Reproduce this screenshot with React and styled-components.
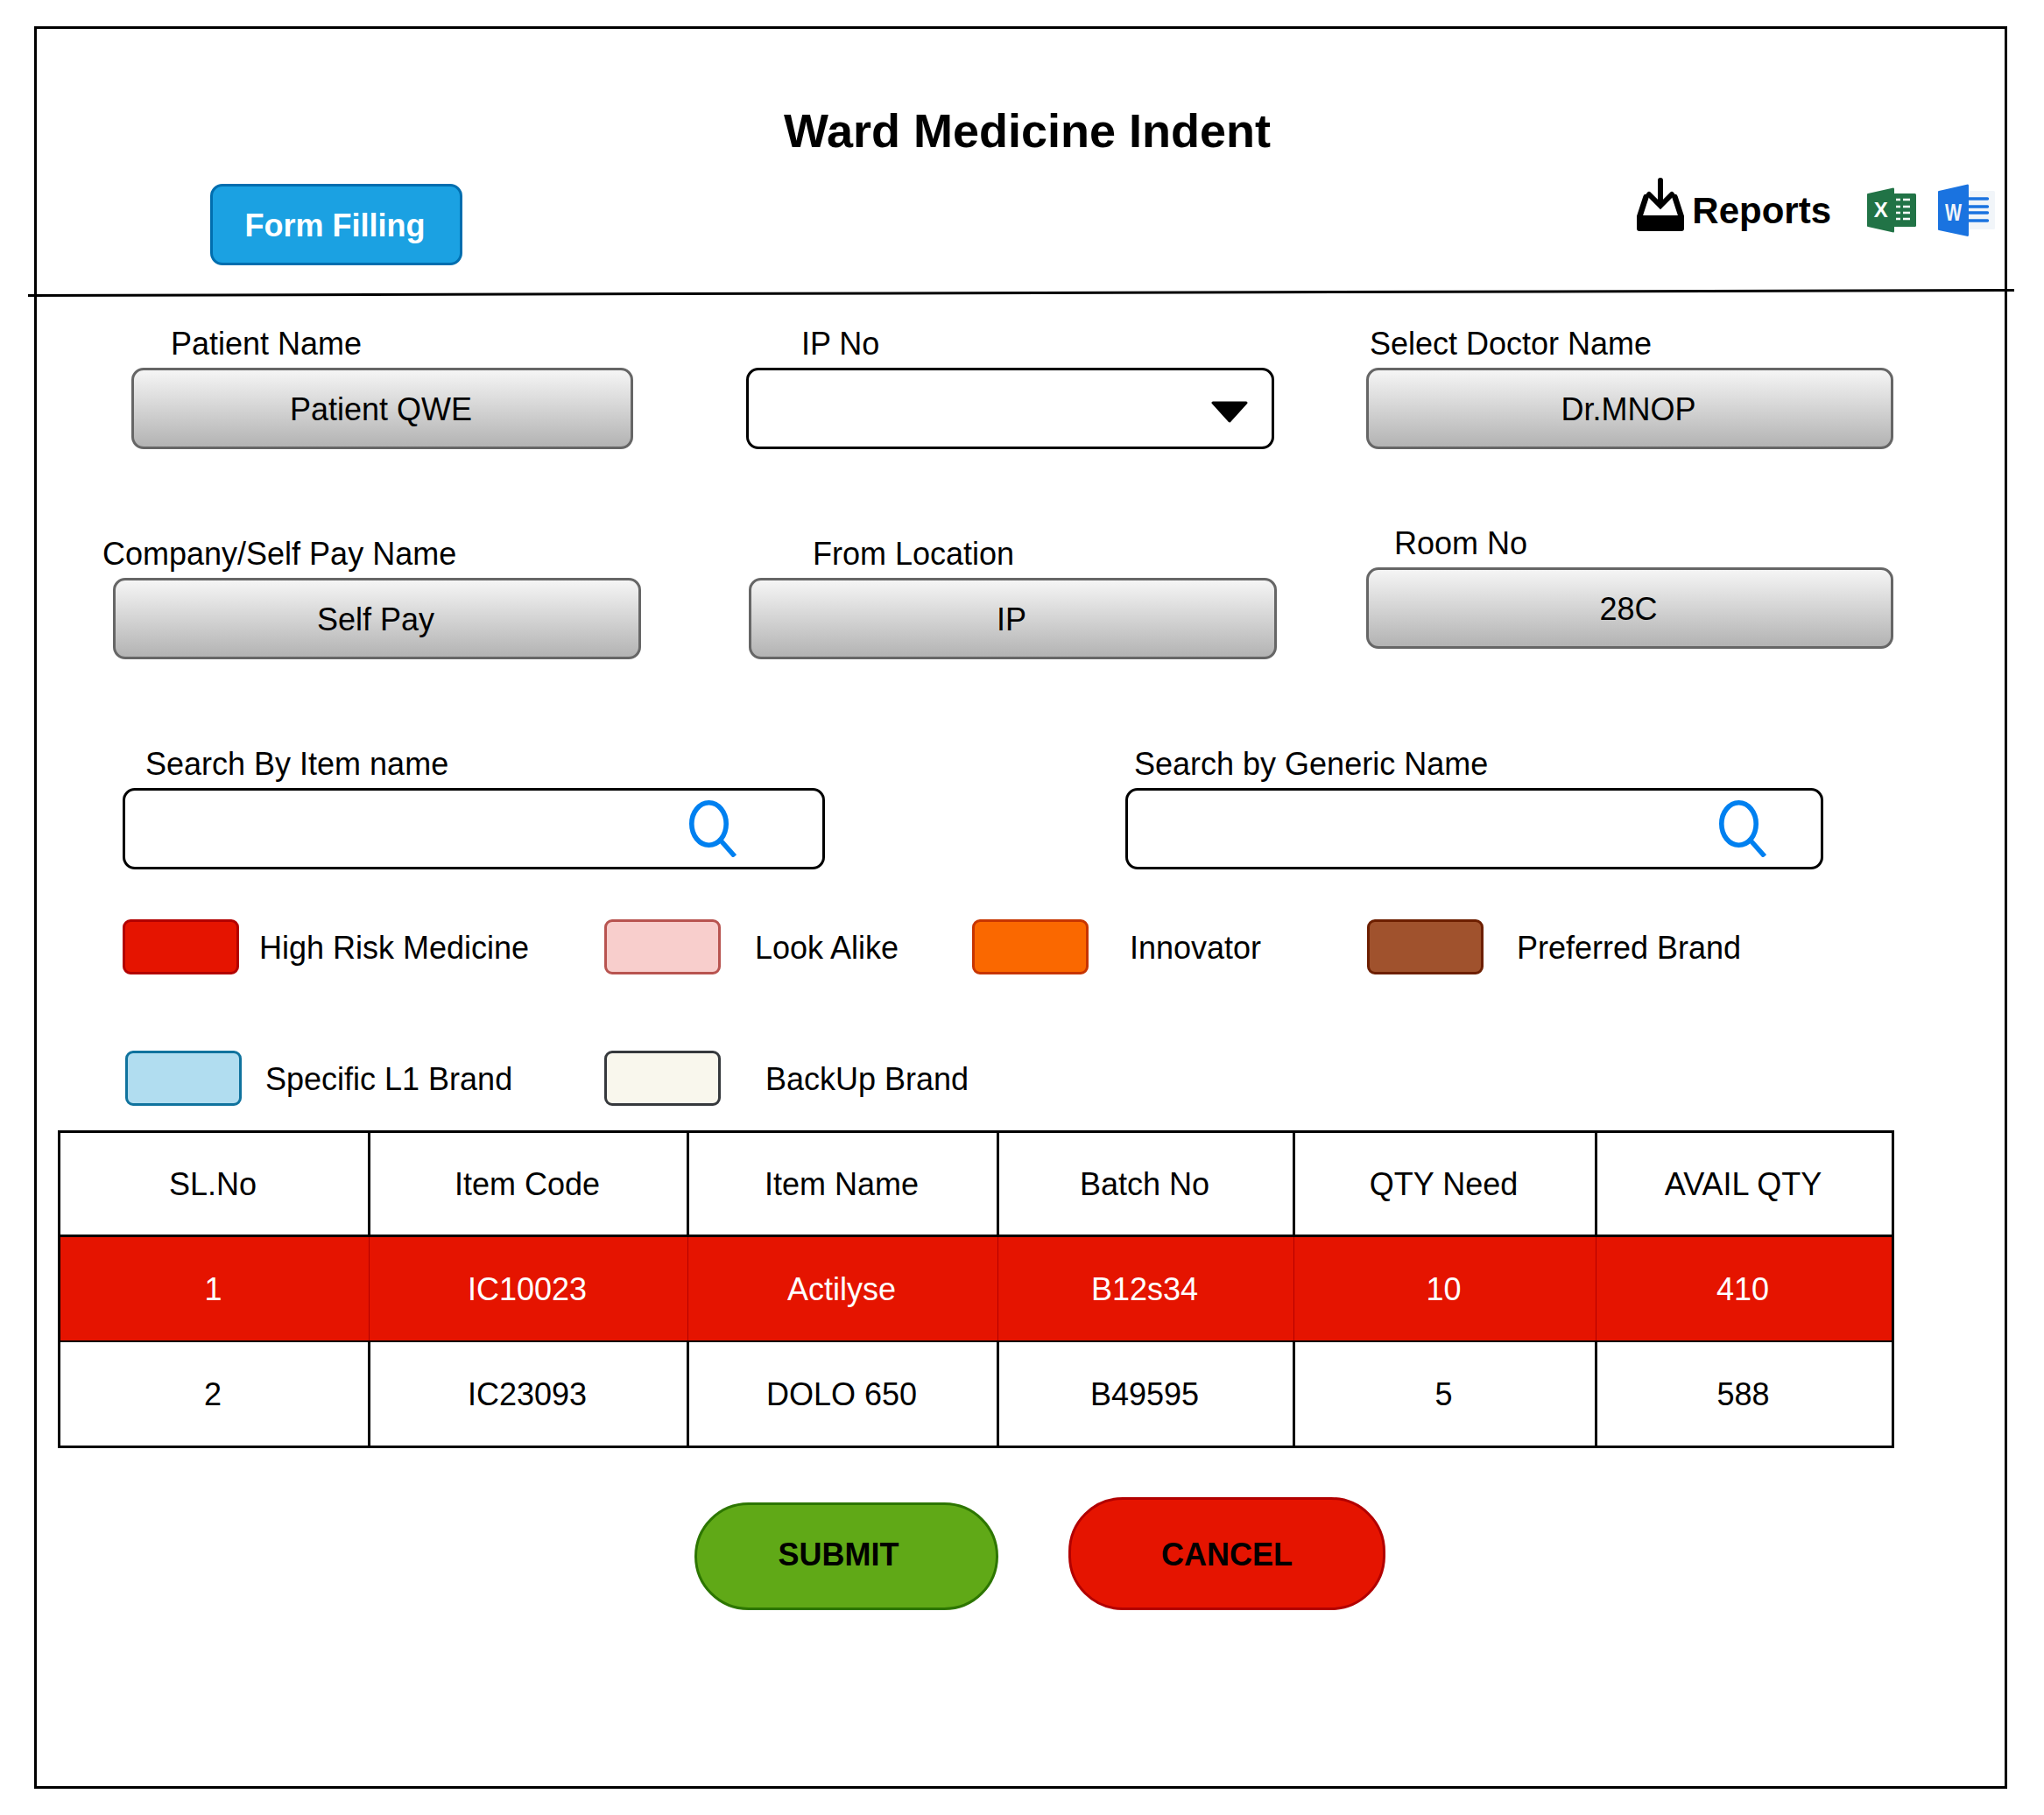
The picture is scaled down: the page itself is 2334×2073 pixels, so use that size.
import React from "react";
import styled, { createGlobalStyle } from "styled-components";

const GlobalStyle = createGlobalStyle`
  html, body {
    margin: 0;
    padding: 0;
    background: #fff;
    color: #000;
    font-family: "Liberation Sans", Arial, sans-serif;
  }
`;

const Page = styled.div`
  padding: 30px 0 30px 39px;
  width: 2334px;
  height: 2073px;
  box-sizing: border-box;
  overflow: hidden;
`;

const Frame = styled.div`
  width: 2253px;
  height: 2013px;
  box-sizing: border-box;
  border: 3px solid #000;
`;

const Title = styled.h1`
  margin: 0;
  padding: 85px 0 0 15px;
  font-size: 54px;
  line-height: 62px;
  font-weight: 700;
  text-align: center;
`;

const Toolbar = styled.div`
  display: flex;
  align-items: flex-start;
  justify-content: space-between;
  margin-top: 30px;
  padding: 0 11px 0 198px;
`;

const ModeButton = styled.button`
  width: 288px;
  height: 93px;
  box-sizing: border-box;
  border: 3px solid #006eaf;
  border-radius: 14px;
  background: #1ba1e2;
  color: #fff;
  font: 700 36px "Liberation Sans", Arial, sans-serif;
  padding: 2px 3px 0 0;
`;

const Exports = styled.div`
  display: flex;
  align-items: center;
  height: 60px;
`;

const ReportsIcon = styled.svg`
  width: 54px;
  height: 61px;
  margin-bottom: 14px;
`;

const ReportsText = styled.span`
  margin: 2px 41px 0 9px;
  font-size: 42px;
  font-weight: 700;
`;

const FileIcon = styled.svg`
  width: ${(p) => p.$w}px;
  height: ${(p) => p.$h}px;
  margin-right: ${(p) => p.$gap || 0}px;
`;

const Divider = styled.div`
  width: 2268px;
  height: 3px;
  margin: 30px 0 0 -10px;
  background: #000;
  transform: rotate(-0.15deg);
`;

const Row = styled.div`
  display: flex;
  align-items: flex-end;
  margin-top: ${(p) => p.$top}px;
`;

const Field = styled.div`
  display: flex;
  flex-direction: column;
  flex: none;
  width: ${(p) => p.$width}px;
  margin-left: ${(p) => p.$left}px;
  margin-bottom: ${(p) => p.$lift || 0}px;
`;

const Label = styled.label`
  height: 42px;
  margin: 0 0 6px ${(p) => p.$indent}px;
  font-size: 36px;
  line-height: 42px;
  white-space: nowrap;
`;

const ReadOnlyBox = styled.div`
  display: flex;
  align-items: center;
  justify-content: center;
  height: 93px;
  box-sizing: border-box;
  padding: 2px 3px 0 0;
  border: 3px solid #666;
  border-radius: 14px;
  background: linear-gradient(180deg, #f5f5f5 0%, #b3b3b3 100%);
  font-size: 36px;
`;

const InputBox = styled.div`
  display: flex;
  align-items: center;
  justify-content: flex-end;
  height: 93px;
  box-sizing: border-box;
  border: 3px solid #000;
  border-radius: 14px;
  background: #fff;
  padding-right: ${(p) => p.$pad}px;
`;

const Caret = styled.svg`
  width: 42px;
  height: 25px;
  margin-top: 8px;
`;

const SearchGlyph = styled.svg`
  width: 56px;
  height: 65px;
`;

const LegendRow = styled.div`
  display: flex;
  align-items: center;
  margin-top: ${(p) => p.$top}px;
  padding-left: ${(p) => p.$left}px;
`;

const LegendItem = styled.div`
  display: flex;
  align-items: center;
  flex: none;
  width: ${(p) => p.$width}px;
`;

const LegendText = styled.span`
  margin-top: 2px;
  font-size: 36px;
`;

const Swatch = styled.span`
  flex: none;
  width: 133px;
  height: 63px;
  box-sizing: border-box;
  margin-right: ${(p) => p.$gap}px;
  border: 3px solid ${(p) => p.$line};
  border-radius: 9px;
  background: ${(p) => p.$fill};
`;

const Table = styled.table`
  width: 2094px;
  margin: 28px 0 0 24px;
  border-collapse: collapse;
  table-layout: fixed;
  border: 3px solid #000;
  font-size: 36px;
`;

const HeadCell = styled.th`
  width: ${(p) => p.$width}px;
  height: 119px;
  box-sizing: border-box;
  padding: 2px 3px 0 0;
  border: 3px solid #000;
  font-weight: 400;
`;

const Cell = styled.td`
  height: ${(p) => (p.$alert ? 120 : 121)}px;
  box-sizing: border-box;
  padding: 3px 3px 0 0;
  text-align: center;
  border-style: solid;
  border-width: 2px 3px;
  border-color: #000;
  ${(p) =>
    p.$alert &&
    `
    background: #e51400;
    color: #fff;
    border-left: 1px solid #b20000;
    border-right: 1px solid #b20000;
  `}
`;

const Actions = styled.div`
  display: flex;
  align-items: flex-end;
  margin: 56px 0 0 751px;
`;

const PillButton = styled.button`
  width: ${(p) => p.$width}px;
  height: ${(p) => p.$height}px;
  box-sizing: border-box;
  margin-right: 80px;
  padding: 2px ${(p) => p.$shift || 0}px ${(p) => p.$drop}px 0;
  border: 3px solid ${(p) => p.$line};
  border-radius: 62px;
  background: ${(p) => p.$fill};
  color: #000;
  font: 700 36px "Liberation Sans", Arial, sans-serif;
`;

const SearchIcon = () => (
  <SearchGlyph viewBox="0 0 56 65" aria-hidden="true">
    <ellipse cx="22.5" cy="27" rx="19.7" ry="24.2" fill="none" stroke="#0080f0" strokeWidth="5.6" />
    <path d="M36 46 L52 64" fill="none" stroke="#0080f0" strokeWidth="5.6" />
  </SearchGlyph>
);

const SEARCH_FIELDS = [
  { label: "Search By Item name", left: 98, width: 802, indent: 26, pad: 96 },
  { label: "Search by Generic Name", left: 343, width: 797, indent: 10, pad: 60 },
];

const COLUMNS = [
  { title: "SL.No", width: 354 },
  { title: "Item Code", width: 364 },
  { title: "Item Name", width: 354 },
  { title: "Batch No", width: 338 },
  { title: "QTY Need", width: 345 },
  { title: "AVAIL QTY", width: 339 },
];

const ROWS = [
  { id: 1, alert: true, cells: ["1", "IC10023", "Actilyse", "B12s34", "10", "410"] },
  { id: 2, cells: ["2", "IC23093", "DOLO 650", "B49595", "5", "588"] },
];

export default function App() {
  return (
    <Page>
      <GlobalStyle />
      <Frame>
        <Title>Ward Medicine Indent</Title>
        <Toolbar>
          <ModeButton>Form Filling</ModeButton>
          <Exports>
            <ReportsIcon viewBox="0 0 54 61" aria-hidden="true">
              <path d="M27 3 V31 M14 19 L27 32 L40 19" fill="none" stroke="#000" strokeWidth="6" strokeLinecap="round" />
              <path d="M10.5 22 L3 45 M43.5 22 L51 45" fill="none" stroke="#000" strokeWidth="6.5" strokeLinecap="round" />
              <rect x="0" y="43" width="54" height="18" rx="3" fill="#000" />
            </ReportsIcon>
            <ReportsText>Reports</ReportsText>
            <FileIcon $w={56} $h={52} $gap={25} viewBox="0 0 56 52" aria-hidden="true">
              <rect x="30" y="7" width="26" height="38" rx="1.5" fill="#217346" />
              <path d="M33 14 h5 M41 14 h8 M33 22 h5 M41 22 h8 M33 29 h5 M41 29 h8 M33 36 h5 M41 36 h8" stroke="#fff" strokeWidth="2.7" />
              <path d="M1 7 L30 0.5 Q31 0.5 31 2 V50 Q31 51.5 30 51.5 L1 45 Q0 45 0 44 V8 Q0 7 1 7 Z" fill="#217346" />
              <text x="15.7" y="34" textAnchor="middle" fill="#fff" fontFamily="Liberation Sans, sans-serif" fontWeight="700" fontSize="24">X</text>
            </FileIcon>
            <FileIcon $w={65} $h={60} viewBox="0 0 65 60" aria-hidden="true">
              <rect x="35" y="8" width="30" height="44" rx="1.5" fill="#f1f5f9" />
              <path d="M35 17 h21.5 M35 26 h21.5 M35 33 h21.5 M35 42 h21.5" stroke="#1a73e0" strokeWidth="3.4" strokeLinecap="round" />
              <path d="M1 8 L34 0.5 Q35 0.5 35 2 V58 Q35 60 34 60 L1 53 Q0 53 0 52 V9 Q0 8 1 8 Z" fill="#1a73e0" />
              <text x="8" y="42" textLength="19" lengthAdjust="spacingAndGlyphs" fill="#f1f5f9" fontFamily="Liberation Sans, sans-serif" fontWeight="700" fontSize="28">W</text>
            </FileIcon>
          </Exports>
        </Toolbar>
        <Divider />

        <Row $top={36}>
          <Field $left={108} $width={573}>
            <Label $indent={45}>Patient Name</Label>
            <ReadOnlyBox>Patient QWE</ReadOnlyBox>
          </Field>
          <Field $left={129} $width={603}>
            <Label $indent={63}>IP No</Label>
            <InputBox $pad={27}>
              <Caret viewBox="0 0 42 25" aria-hidden="true">
                <path d="M2 2 H40 L21 23 Z" fill="#000" stroke="#000" strokeWidth="3" strokeLinejoin="round" />
              </Caret>
            </InputBox>
          </Field>
          <Field $left={105} $width={602}>
            <Label $indent={4}>Select Doctor Name</Label>
            <ReadOnlyBox>Dr.MNOP</ReadOnlyBox>
          </Field>
        </Row>

        <Row $top={87}>
          <Field $left={87} $width={603}>
            <Label $indent={-12}>Company/Self Pay Name</Label>
            <ReadOnlyBox>Self Pay</ReadOnlyBox>
          </Field>
          <Field $left={123} $width={603}>
            <Label $indent={73}>From Location</Label>
            <ReadOnlyBox>IP</ReadOnlyBox>
          </Field>
          <Field $left={102} $width={602} $lift={12}>
            <Label $indent={32}>Room No</Label>
            <ReadOnlyBox>28C</ReadOnlyBox>
          </Field>
        </Row>

        <Row $top={99}>
          {SEARCH_FIELDS.map((f) => (
            <Field key={f.label} $left={f.left} $width={f.width}>
              <Label $indent={f.indent}>{f.label}</Label>
              <InputBox $pad={f.pad}>
                <SearchIcon />
              </InputBox>
            </Field>
          ))}
        </Row>

        <LegendRow $top={57} $left={98}>
          <LegendItem $width={550}>
            <Swatch $gap={23} $fill="#e51400" $line="#b20000" />
            <LegendText>High Risk Medicine</LegendText>
          </LegendItem>
          <LegendItem $width={420}>
            <Swatch $gap={39} $fill="#f8cecc" $line="#b85450" />
            <LegendText>Look Alike</LegendText>
          </LegendItem>
          <LegendItem $width={451}>
            <Swatch $gap={47} $fill="#fa6800" $line="#c73500" />
            <LegendText>Innovator</LegendText>
          </LegendItem>
          <LegendItem $width={600}>
            <Swatch $gap={38} $fill="#a0522d" $line="#6d1f00" />
            <LegendText>Preferred Brand</LegendText>
          </LegendItem>
        </LegendRow>

        <LegendRow $top={87} $left={101}>
          <LegendItem $width={547}>
            <Swatch $gap={27} $fill="#b1ddf0" $line="#10739e" />
            <LegendText>Specific L1 Brand</LegendText>
          </LegendItem>
          <LegendItem $width={500}>
            <Swatch $gap={51} $fill="#f9f7ed" $line="#36393d" />
            <LegendText>BackUp Brand</LegendText>
          </LegendItem>
        </LegendRow>

        <Table>
          <thead>
            <tr>
              {COLUMNS.map((c) => (
                <HeadCell key={c.title} $width={c.width}>
                  {c.title}
                </HeadCell>
              ))}
            </tr>
          </thead>
          <tbody>
            {ROWS.map((r) => (
              <tr key={r.id}>
                {r.cells.map((v) => (
                  <Cell key={v} $alert={r.alert}>
                    {v}
                  </Cell>
                ))}
              </tr>
            ))}
          </tbody>
        </Table>

        <Actions>
          <PillButton $width={347} $height={123} $shift={18} $drop={5} $fill="#60a917" $line="#2d7600">
            SUBMIT
          </PillButton>
          <PillButton $width={362} $height={129} $drop={0} $fill="#e51400" $line="#b20000">
            CANCEL
          </PillButton>
        </Actions>
      </Frame>
    </Page>
  );
}
